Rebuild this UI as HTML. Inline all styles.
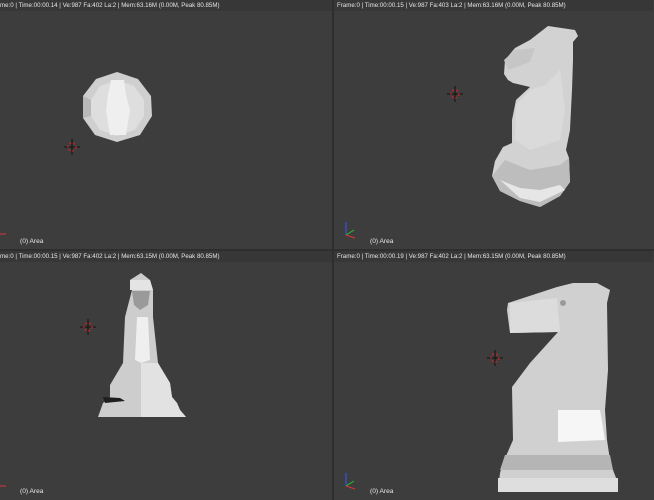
<!DOCTYPE html>
<html><head><meta charset="utf-8"><style>
html,body{margin:0;padding:0;width:654px;height:500px;overflow:hidden;background:#3d3d3d;font-family:"Liberation Sans",sans-serif}
.hdr{position:absolute;height:11px;background:#373737;color:#e6e6e6;font-size:6.15px;line-height:11px;white-space:nowrap;overflow:hidden}
.lbl{position:absolute;color:#e8e8e8;font-size:6.6px}
</style></head><body>
<svg width="654" height="500" style="position:absolute;left:0;top:0">
<rect x="0" y="0" width="654" height="500" fill="#3d3d3d"/>
<rect x="332" y="0" width="2" height="500" fill="#2e2e2e"/>
<rect x="0" y="249" width="654" height="2" fill="#2e2e2e"/>
<!-- top-left nonagon -->
<polygon points="117,72 138,79 151,96 152,116 140,135 117,142 95,135 83,118 83,96 96,79" fill="#cfcfcf"/>
<polygon points="117,80 134,86 144,100 144,116 135,130 117,136 100,130 91,116 91,100 100,86" fill="#dedede"/>
<polygon points="111,80 124,80 126,95 130,110 126,135 110,135 106,110 108,95" fill="#efefef"/>
<polygon points="83,96 91,100 91,116 83,118" fill="#b9b9b9"/>
<!-- top-right knight -->
<polygon points="548,26 575,30 578,36 573,42 573,60 572,90 570,130 566,150 569,158 570,182 560,196 540,207 520,201 500,191 492,176 495,161 503,147 512,143 512,120 516,100 530,87 513,83 508,80 504,74 505,60 515,48 530,40" fill="#d2d2d2"/>
<polygon points="505,160 530,170 560,165 569,158 570,182 560,196 540,207 520,201 500,191 492,176" fill="#bdbdbd"/>
<polygon points="500,180 520,188 540,190 560,185 565,190 540,202 520,198" fill="#e6e6e6"/>
<polygon points="530,90 545,85 560,70 565,110 560,140 530,150 515,140 516,105" fill="#dadada"/>
<polygon points="504,60 515,50 535,48 530,62 508,70" fill="#c6c6c6"/>
<!-- bottom-left knight -->
<polygon points="141,273 130,280 132,290 125,317 123,363 110,385 110,397 103,403 98,417 186,417 180,410 177,403 172,397 170,383 158,363 153,317 153,290 150,280" fill="#cdcdcd"/>
<polygon points="130,280 150,280 153,290 130,290" fill="#e4e4e4"/>
<polygon points="137,317 148,317 150,360 141,363 135,360" fill="#efefef"/>
<polygon points="141,363 158,363 170,383 172,397 177,403 180,410 186,417 141,417" fill="#e2e2e2"/>
<polygon points="103,397 120,398 125,401 105,403" fill="#1f1f1f"/>
<polygon points="132,291 150,291 148,305 140,310 134,305" fill="#9a9a9a"/>
<!-- bottom-right knight -->
<polygon points="573,283 597,283 610,290 607,303 608,370 605,410 607,440 610,460 613,470 618,483 618,492 498,492 500,473 503,463 513,440 512,387 530,363 558,332 555,332 510,333 507,310 508,303 557,287" fill="#d0d0d0"/>
<polygon points="558,410 600,410 605,440 558,442" fill="#f6f6f6"/>
<polygon points="510,303 557,298 560,332 510,333" fill="#dcdcdc"/>
<polygon points="505,455 610,455 613,470 500,470" fill="#b5b5b5"/>
<polygon points="498,478 618,478 618,492 498,492" fill="#dedede"/>
<circle cx="563" cy="303" r="3" fill="#9a9a9a"/>
<!-- cursors -->
<g stroke="#111" stroke-width="1">
<path d="M64,147h16M72,139v16M447,94h16M455,86v16M80,327h16M88,319v16M487,358h16M495,350v16"/>
</g>
<g fill="none" stroke-width="1.2" stroke-dasharray="2 2">
<circle cx="72" cy="147" r="4" stroke="#d22"/><circle cx="455" cy="94" r="4" stroke="#d22"/>
<circle cx="88" cy="327" r="4" stroke="#d22"/><circle cx="495" cy="358" r="4" stroke="#d22"/>
</g>
<!-- axes -->
<g stroke-width="1"><path d="M346,235v-13" stroke="#3355ff"/><path d="M346,235l8,-5" stroke="#2c2"/><path d="M346,235l9,3" stroke="#d33"/>
<path d="M346,486v-13" stroke="#3355ff"/><path d="M346,486l8,-5" stroke="#2c2"/><path d="M346,486l9,3" stroke="#d33"/>
<path d="M0,234h6" stroke="#d33"/><path d="M0,486h6" stroke="#d33"/></g>
</svg>
<div class="hdr" style="left:0;top:0;width:332px">me:0 | Time:00:00.14 | Ve:987 Fa:402 La:2 | Mem:63.16M (0.00M, Peak 80.85M)</div>
<div class="hdr" style="left:334px;top:0;width:316px;padding-left:3px">Frame:0 | Time:00:00.15 | Ve:987 Fa:403 La:2 | Mem:63.16M (0.00M, Peak 80.85M)</div>
<div class="hdr" style="left:0;top:251px;width:332px">me:0 | Time:00:00.15 | Ve:987 Fa:402 La:2 | Mem:63.15M (0.00M, Peak 80.85M)</div>
<div class="hdr" style="left:334px;top:251px;width:316px;padding-left:3px">Frame:0 | Time:00:00.19 | Ve:987 Fa:402 La:2 | Mem:63.15M (0.00M, Peak 80.85M)</div>
<div class="lbl" style="left:20px;top:238px">(0) Area</div>
<div class="lbl" style="left:370px;top:238px">(0) Area</div>
<div class="lbl" style="left:20px;top:488px">(0) Area</div>
<div class="lbl" style="left:370px;top:488px">(0) Area</div>
</body></html>
